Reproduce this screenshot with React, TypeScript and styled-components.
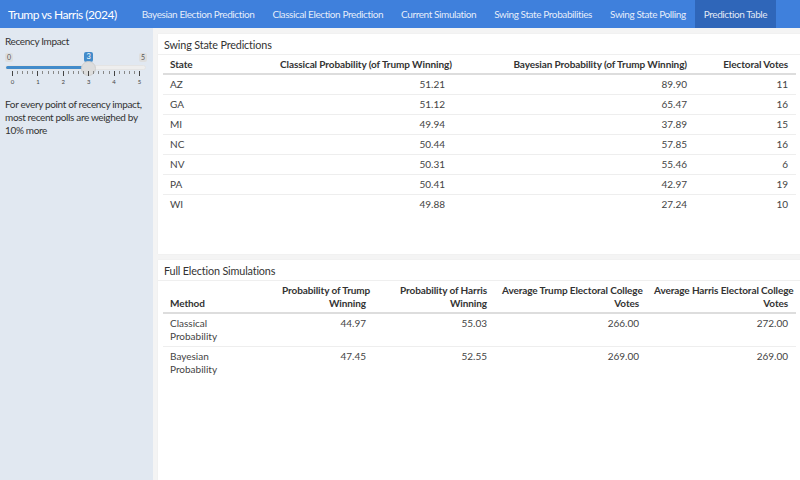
import React from 'react'
import styled, { createGlobalStyle } from 'styled-components'

const GlobalStyle = createGlobalStyle`
  html, body {
    margin: 0;
    padding: 0;
    width: 800px;
    height: 480px;
    overflow: hidden;
    font-family: "Lato", "Noto Sans", sans-serif;
    color: #333;
  }
  * { box-sizing: border-box; }
`

const Page = styled.div`
  width: 800px;
  height: 480px;
  display: flex;
  flex-direction: column;
  background: #f4f4f4;
`

const NavBar = styled.div`
  height: 28px;
  flex: none;
  display: flex;
  align-items: stretch;
  background: #3f80dc;
`

const Brand = styled.div`
  display: flex;
  align-items: center;
  padding: 0 16px 0 8px;
  font-size: 12px;
  letter-spacing: -0.5px;
  color: #fff;
  white-space: nowrap;
`

const NavLink = styled.div<{ $active?: boolean }>`
  display: flex;
  align-items: center;
  padding: 0 9px;
  font-size: 10px;
  letter-spacing: -0.4px;
  color: rgba(255, 255, 255, 0.88);
  white-space: nowrap;
  background: ${p => (p.$active ? '#2f66b9' : 'transparent')};
`

const Body = styled.div`
  flex: 1;
  display: flex;
  min-height: 0;
`

const Sidebar = styled.div`
  width: 153px;
  flex: none;
  background: #e1e8f1;
  padding: 7px 5px 0 5px;
  font-size: 10px;
  letter-spacing: -0.35px;
`

const SideLabel = styled.div`
  line-height: 13px;
  margin-bottom: 4px;
`

const Slider = styled.div`
  position: relative;
  height: 40px;
  margin: 0 -2px;
  letter-spacing: 0;
`

const EdgeTag = styled.span<{ $right?: boolean }>`
  position: absolute;
  top: 1px;
  ${p => (p.$right ? 'right: 3px;' : 'left: 2px;')}
  background: #dedede;
  color: #555;
  font-size: 7px;
  line-height: 9px;
  padding: 0 2px;
  border-radius: 2px;
`

const ValueTag = styled.span`
  position: absolute;
  top: 0;
  left: 81px;
  background: #428bca;
  color: #fff;
  font-size: 7.5px;
  line-height: 10px;
  padding: 0 2.5px;
  border-radius: 2px;
`

const Track = styled.div`
  position: absolute;
  top: 13px;
  left: 2px;
  right: 4px;
  height: 5px;
  border-radius: 3px;
  background: #eeeeee;
  border: 1px solid #e4e4e4;
  overflow: hidden;
`

const TrackFill = styled.div`
  height: 100%;
  background: #428bca;
`

const Handle = styled.div`
  position: absolute;
  top: 8.5px;
  left: 78px;
  width: 15px;
  height: 15px;
  border-radius: 50%;
  background: #dddddd;
  border: 1px solid #cfcfcf;
`

const Grid = styled.div`
  position: absolute;
  top: 19px;
  left: 0;
  right: 0;
  height: 20px;
`

const Tick = styled.span<{ $major?: boolean }>`
  position: absolute;
  top: 0;
  width: 1px;
  height: ${p => (p.$major ? '5px' : '3px')};
  background: ${p => (p.$major ? '#444' : '#888')};
`

const TickNum = styled.span`
  position: absolute;
  top: 7px;
  width: 10px;
  margin-left: -5px;
  text-align: center;
  font-size: 6px;
  color: #444;
`

const HelpText = styled.p`
  margin: 6px 0 0 0;
  line-height: 13px;
  font-size: 10px;
`

const Main = styled.div`
  flex: 1;
  padding: 6px 0 0 5px;
  display: flex;
  flex-direction: column;
  gap: 6px;
  min-width: 0;
`

const Card = styled.div<{ $height?: number }>`
  background: #fff;
  ${p => (p.$height ? `height: ${p.$height}px; flex: none;` : 'flex: 1;')}
  box-shadow: 0 0 1px rgba(0, 0, 0, 0.08);
  padding: 0 4px 0 5px;
`

const CardTitle = styled.div`
  font-size: 10.8px;
  letter-spacing: -0.15px;
  line-height: 18px;
  padding: 2px 0 0 6px;
  border-bottom: 1px solid #efefef;
  margin: 0 -4px 0 -5px;
`

const Table = styled.table`
  width: 100%;
  border-collapse: collapse;
  table-layout: fixed;
  font-size: 10px;
`

const Th = styled.th<{ $align?: string }>`
  font-weight: 700;
  text-align: ${p => p.$align || 'right'};
  vertical-align: bottom;
  line-height: 13px;
  letter-spacing: -0.1px;
  padding: 3px 8px 2px 7px;
  border-bottom: 2px solid #ddd;
  white-space: nowrap;
`

const Td = styled.td<{ $align?: string }>`
  text-align: ${p => p.$align || 'right'};
  vertical-align: top;
  line-height: 13px;
  padding: 3px 8px 3px 7px;
  border-top: 1px solid #eee;
  color: #444;
  white-space: nowrap;
`

const BodyRow = styled.tr`
  &:first-child td { border-top: none; }
`

const swing = [
  ['AZ', '51.21', '89.90', '11'],
  ['GA', '51.12', '65.47', '16'],
  ['MI', '49.94', '37.89', '15'],
  ['NC', '50.44', '57.85', '16'],
  ['NV', '50.31', '55.46', '6'],
  ['PA', '50.41', '42.97', '19'],
  ['WI', '49.88', '27.24', '10'],
]

const sims = [
  ['Classical', 'Probability', '44.97', '55.03', '266.00', '272.00'],
  ['Bayesian', 'Probability', '47.45', '52.55', '269.00', '269.00'],
]

const tabs = [
  'Bayesian Election Prediction',
  'Classical Election Prediction',
  'Current Simulation',
  'Swing State Probabilities',
  'Swing State Polling',
  'Prediction Table',
]

const ticks = Array.from({ length: 26 }, (_, i) => i)

const RecencySlider = () => (
  <Slider>
    <EdgeTag>0</EdgeTag>
    <ValueTag>3</ValueTag>
    <EdgeTag $right>5</EdgeTag>
    <Track>
      <TrackFill style={{ width: `${(83.5 / 141) * 100}%` }} />
    </Track>
    <Handle />
    <Grid>
      {ticks.map(i => (
        <Tick key={i} $major={i % 5 === 0} style={{ left: 9 + i * 5.08 }} />
      ))}
      {[0, 1, 2, 3, 4, 5].map(n => (
        <TickNum key={n} style={{ left: 9.5 + n * 25.4 }}>
          {n}
        </TickNum>
      ))}
    </Grid>
  </Slider>
)

export default function App() {
  return (
    <>
      <GlobalStyle />
      <Page>
        <NavBar>
          <Brand>Trump vs Harris (2024)</Brand>
          {tabs.map(t => (
            <NavLink key={t} $active={t === 'Prediction Table'}>
              {t}
            </NavLink>
          ))}
        </NavBar>
        <Body>
          <Sidebar>
            <SideLabel>Recency Impact</SideLabel>
            <RecencySlider />
            <HelpText>
              For every point of recency impact, most recent polls are weighed by 10% more
            </HelpText>
          </Sidebar>
          <Main>
            <Card $height={220}>
              <CardTitle>Swing State Predictions</CardTitle>
              <Table>
                <colgroup>
                  <col style={{ width: 110 }} />
                  <col style={{ width: 180 }} />
                  <col style={{ width: 242 }} />
                  <col style={{ width: 101 }} />
                </colgroup>
                <thead>
                  <tr>
                    <Th $align="left">State</Th>
                    <Th>Classical Probability (of Trump Winning)</Th>
                    <Th>Bayesian Probability (of Trump Winning)</Th>
                    <Th>Electoral Votes</Th>
                  </tr>
                </thead>
                <tbody>
                  {swing.map(r => (
                    <BodyRow key={r[0]}>
                      <Td $align="left">{r[0]}</Td>
                      <Td>{r[1]}</Td>
                      <Td>{r[2]}</Td>
                      <Td>{r[3]}</Td>
                    </BodyRow>
                  ))}
                </tbody>
              </Table>
            </Card>
            <Card>
              <CardTitle>Full Election Simulations</CardTitle>
              <Table>
                <colgroup>
                  <col style={{ width: 112 }} />
                  <col style={{ width: 99 }} />
                  <col style={{ width: 121 }} />
                  <col style={{ width: 152 }} />
                  <col style={{ width: 149 }} />
                </colgroup>
                <thead>
                  <tr>
                    <Th $align="left">Method</Th>
                    <Th>Probability of Trump<br />Winning</Th>
                    <Th>Probability of Harris<br />Winning</Th>
                    <Th>Average Trump Electoral College<br />Votes</Th>
                    <Th>Average Harris Electoral College<br />Votes</Th>
                  </tr>
                </thead>
                <tbody>
                  {sims.map(r => (
                    <BodyRow key={r[0]}>
                      <Td $align="left">{r[0]}<br />{r[1]}</Td>
                      <Td>{r[2]}</Td>
                      <Td>{r[3]}</Td>
                      <Td>{r[4]}</Td>
                      <Td>{r[5]}</Td>
                    </BodyRow>
                  ))}
                </tbody>
              </Table>
            </Card>
          </Main>
        </Body>
      </Page>
    </>
  )
}
